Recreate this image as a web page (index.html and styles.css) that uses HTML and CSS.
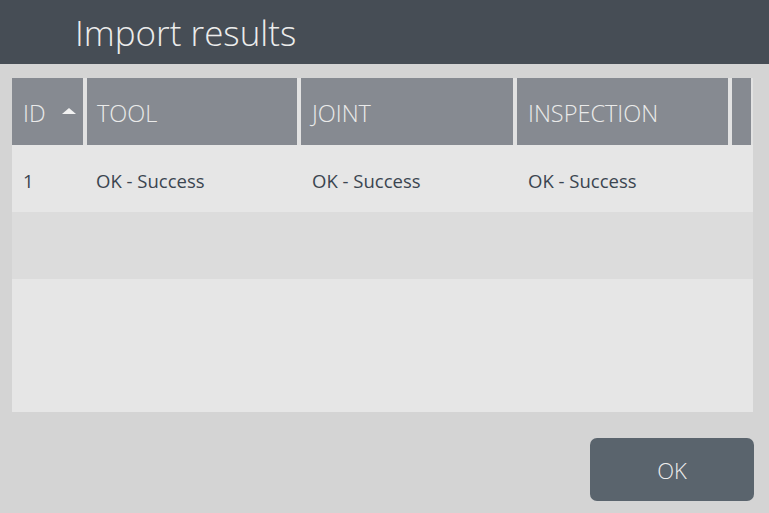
FILE: index.html
```html
<!DOCTYPE html>
<html>
<head>
<meta charset="utf-8">
<link rel="stylesheet" href="styles.css">
</head>
<body>
<div class="dialog">
  <header class="titlebar"><h1 class="title">Import results</h1></header>
  <main class="content">
    <div class="table">
      <div class="thead">
        <div class="th c-id">ID <span class="sort"></span></div>
        <div class="th c-tool">TOOL</div>
        <div class="th c-joint">JOINT</div>
        <div class="th c-insp">INSPECTION</div>
        <div class="th c-extra"></div>
      </div>
      <div class="tr odd">
        <div class="td c-id">1</div>
        <div class="td c-tool">OK - Success</div>
        <div class="td c-joint">OK - Success</div>
        <div class="td c-insp">OK - Success</div>
      </div>
      <div class="tr even"></div>
    </div>
  </main>
  <footer class="footer"><button class="btn">OK</button></footer>
</div>
</body>
</html>
```
FILE: styles.css
```css
* { box-sizing: border-box; }
html, body { margin: 0; padding: 0; }
body {
  width: 769px; height: 513px; overflow: hidden;
  background: #d4d4d4;
  font-family: "Open Sans", "Noto Sans", sans-serif;
}
.dialog { display: flex; flex-direction: column; height: 513px; }
.titlebar {
  height: 64px; background: #464d55;
  display: flex; align-items: center; padding-left: 75px;
}
.title {
  margin: 0; font-weight: 300; font-size: 35px; color: #ececec;
  line-height: 1; padding-top: 1px;
}
.content { padding: 14px 16px 0 12px; }
.table { background: #e6e6e6; height: 334px; }
.thead { display: flex; gap: 4px; height: 67px; background: #e2e2e2; }
.th {
  background: #868a91; color: #eaeaea; font-size: 23.5px; font-weight: 300;
  display: flex; align-items: center; padding-left: 11px; padding-top: 2px;
}
.c-id { width: 71px; flex: none; }
.c-tool { width: 210px; flex: none; padding-left: 10px; }
.c-joint { width: 212px; flex: none; }
.c-insp { width: 211px; flex: none; }
.c-extra { width: 19px; flex: none; }
.sort {
  width: 0; height: 0; margin-left: 16px; margin-top: -4px;
  border-left: 7px solid transparent; border-right: 7px solid transparent;
  border-bottom: 6px solid #f2f2f2;
}
.tr { display: flex; gap: 4px; height: 67px; }
.odd { background: #e6e6e6; }
.even { background: #dcdcdc; }
.td {
  display: flex; align-items: center; padding-left: 11px; padding-top: 3px;
  font-size: 18.5px; color: #3b4550;
}
.td.c-tool { padding-left: 9px; }
.footer { display: flex; justify-content: flex-end; padding: 26px 15px 0 0; }
.btn {
  width: 164px; height: 63px; border: none; border-radius: 7px;
  background: #5a646d; color: #eeeeee;
  font-family: "Open Sans", "Noto Sans", sans-serif; font-size: 22px; font-weight: 300;
  padding: 0;
}
```
